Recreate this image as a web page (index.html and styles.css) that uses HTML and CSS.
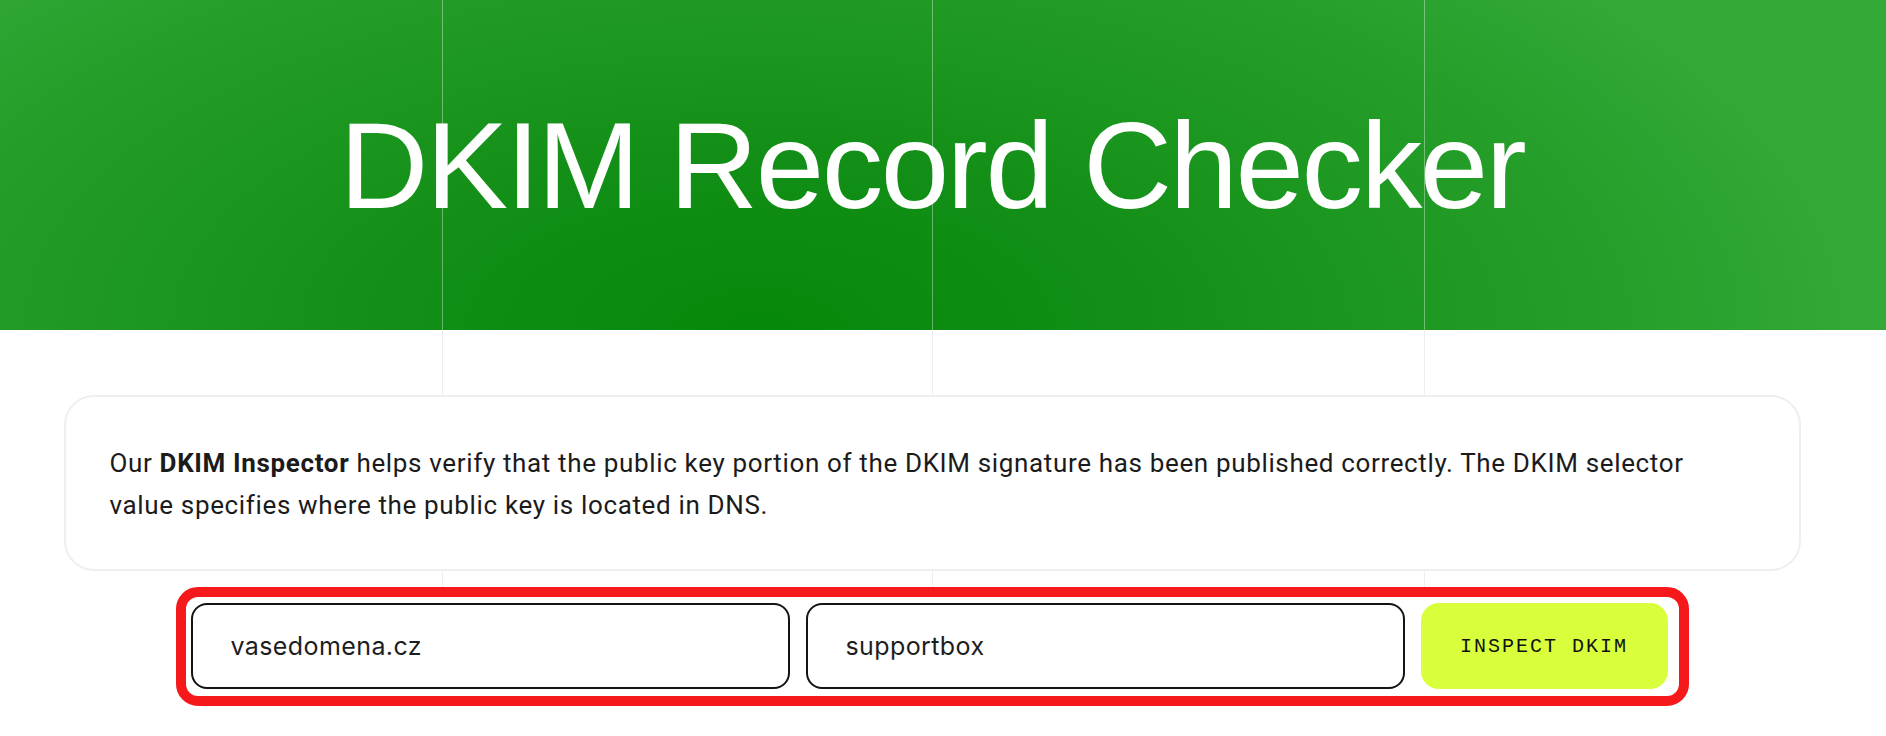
FILE: index.html
```html
<!DOCTYPE html>
<html lang="en">
<head>
<meta charset="utf-8">
<title>DKIM Record Checker</title>
<link rel="stylesheet" href="styles.css">
</head>
<body>
<header class="hero">
  <div class="container">
    <h1 class="hero-title">DKIM Record Checker</h1>
  </div>
</header>
<section class="intro">
  <div class="container">
    <div class="card">
      <p class="card-text">Our <strong>DKIM Inspector</strong> helps verify that the public key portion of the DKIM signature has been published correctly. The DKIM selector value specifies where the public key is located in DNS.</p>
    </div>
  </div>
</section>
<section class="form-section">
  <div class="container">
    <form class="check-form">
      <input class="field" type="text" value="vasedomena.cz" aria-label="Domain">
      <input class="field" type="text" value="supportbox" aria-label="Selector">
      <button class="submit" type="button">INSPECT DKIM</button>
    </form>
  </div>
</section>
</body>
</html>
```
FILE: styles.css
```css
* { box-sizing: border-box; }

html, body {
  margin: 0;
  padding: 0;
  background: #ffffff;
}

body {
  font-family: "Roboto", "Liberation Sans", sans-serif;
  color: #1a1a1a;
}

.container {
  width: 1864px;
  margin: 0 22px 0 0;
}

.hero {
  height: 330px;
  background:
    linear-gradient(to right,
      transparent 442px, rgba(255,255,255,0.36) 442px, rgba(255,255,255,0.36) 443px, transparent 443px,
      transparent 932px, rgba(255,255,255,0.36) 932px, rgba(255,255,255,0.36) 933px, transparent 933px,
      transparent 1424px, rgba(255,255,255,0.36) 1424px, rgba(255,255,255,0.36) 1425px, transparent 1425px),
    radial-gradient(ellipse 1100px 520px at 760px 330px, #06880a 0%, #138f17 35%, #229c26 70%, #2aa22e 85%, #33a938 100%);
  display: flex;
  align-items: flex-start;
}

.hero-title {
  margin: 0;
  padding-top: 96px;
  text-align: center;
  font-family: "Liberation Sans", Arial, sans-serif;
  font-weight: 400;
  font-size: 123px;
  line-height: 140px;
  letter-spacing: -2.4px;
  color: #ffffff;
}

.intro {
  padding: 65px 0 16px;
  background: linear-gradient(to right,
      transparent 442px, #eeeeee 442px, #eeeeee 443px, transparent 443px,
      transparent 932px, #eeeeee 932px, #eeeeee 933px, transparent 933px,
      transparent 1424px, #eeeeee 1424px, #eeeeee 1425px, transparent 1425px);
}

.card {
  width: 1737px;
  margin: 0 auto;
  background: #ffffff;
  border: 2px solid #efefef;
  border-radius: 30px;
  padding: 45px 60px 43px 44px;
}

.card-text {
  margin: 0;
  font-size: 26px;
  letter-spacing: 0.65px;
  line-height: 42px;
  color: #1b1b1b;
}

.card-text strong {
  font-weight: 700;
}

.form-section {
  background: #ffffff;
  padding-bottom: 30px;
}

.check-form {
  width: 1513px;
  margin: 0 auto;
  display: flex;
  gap: 16px;
  border: 10px solid #f5191c;
  border-radius: 22px;
  padding: 6px 10px 7px 5px;
  background: #ffffff;
}

.field {
  flex: 0 0 599px;
  height: 86px;
  border: 2px solid #141414;
  border-radius: 16px;
  padding: 0 0 0 38px;
  font-family: "Inter", "Liberation Sans", sans-serif;
  font-size: 25px;
  letter-spacing: 0.4px;
  color: #1d1d1d;
  background: #ffffff;
  outline: none;
}

.submit {
  flex: 0 0 247px;
  height: 86px;
  border: none;
  border-radius: 18px;
  background: #d9fe3c;
  font-family: "Liberation Mono", "DejaVu Sans Mono", monospace;
  font-size: 20px;
  letter-spacing: 2px;
  color: #111111;
  cursor: pointer;
}
```
